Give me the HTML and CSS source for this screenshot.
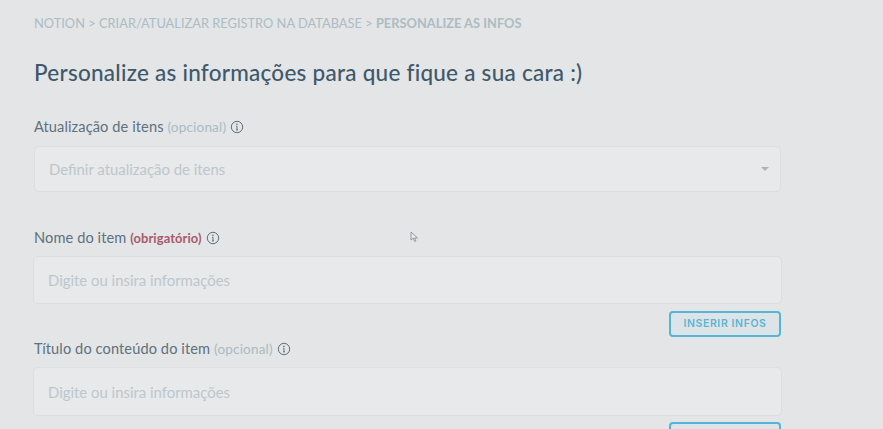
FILE: index.html
```html
<!DOCTYPE html>
<html lang="pt-BR">
<head>
<meta charset="utf-8">
<title>Personalize as infos</title>
<link rel="stylesheet" href="styles.css">
</head>
<body>
<main class="page">
  <nav class="crumbs">NOTION &gt; CRIAR/ATUALIZAR REGISTRO NA DATABASE &gt; <b>PERSONALIZE AS INFOS</b></nav>
  <h1 class="title">Personalize as informações para que fique a sua cara :)</h1>

  <section class="field field-select">
    <label class="label"><span>Atualização de itens <span class="opt">(opcional)</span></span>
      <svg class="info" viewBox="0 0 14 14"><circle cx="7" cy="7" r="5.7"/><path d="M7 6.4v3.4M6 9.9h2M6.2 6.4H7"/><circle class="dot" cx="6.9" cy="4.4" r=".8"/></svg>
    </label>
    <div class="box select-box"><span class="ph">Definir atualização de itens</span><i class="caret"></i></div>
  </section>

  <section class="field field-name">
    <label class="label"><span>Nome do item <span class="req">(obrigatório)</span></span>
      <svg class="info" viewBox="0 0 14 14"><circle cx="7" cy="7" r="5.7"/><path d="M7 6.4v3.4M6 9.9h2M6.2 6.4H7"/><circle class="dot" cx="6.9" cy="4.4" r=".8"/></svg>
    </label>
    <div class="box input-box"><span class="ph">Digite ou insira informações</span></div>
    <div class="actions"><button class="btn">INSERIR INFOS</button></div>
  </section>

  <section class="field field-title">
    <label class="label"><span>Título do conteúdo do item <span class="opt">(opcional)</span></span>
      <svg class="info" viewBox="0 0 14 14"><circle cx="7" cy="7" r="5.7"/><path d="M7 6.4v3.4M6 9.9h2M6.2 6.4H7"/><circle class="dot" cx="6.9" cy="4.4" r=".8"/></svg>
    </label>
    <div class="box input-box"><span class="ph">Digite ou insira informações</span></div>
    <div class="actions"><button class="btn">INSERIR INFOS</button></div>
  </section>
</main>
<svg class="cursor" viewBox="0 0 10 12"><path d="M1 1v8l2.200-1.800L4.600 10.500l1.300-.6-1.300-3H7.500z"/></svg>
</body>
</html>
```
FILE: styles.css
```css
* { box-sizing: border-box; }
html, body { margin: 0; height: 100%; overflow: hidden; }
body { background: #e3e5e7; font-family: "Lato", "Liberation Sans", sans-serif; color: #4a5f6c; position: relative; }
.page { width: 782px; padding: 15px 0 0 34px; }
.crumbs { font-size: 12.850px; line-height: 16px; color: #adbcc2; font-weight: 400; }
.crumbs b { font-weight: 700; }
.title { margin: 24px 0 0; font-size: 22.500px; line-height: 36px; font-weight: 500; color: #40586a; letter-spacing: .25px; }
.label { display: flex; align-items: center; gap: 4px; height: 18px; font-size: 14.600px; line-height: 18px; color: #5f717c; letter-spacing: .1px; white-space: pre; }
.opt { font-size: 13.500px; color: #a9bcc2; letter-spacing: .2px; }
.req { font-size: 12.900px; font-weight: 700; color: #a85a6a; }
.info { width: 14px; height: 14px; fill: none; stroke: #5f7079; stroke-width: 1; }
.info .dot { fill: #5f7079; stroke: none; }
.field-select { margin-top: 27px; }
.field-name { margin-top: 37px; }
.field-title { margin-top: 3px; }
.box { display: flex; align-items: center; justify-content: space-between; background: #e8e9ea; border: 1px solid #dadfe2; border-radius: 5px; font-size: 14.900px; color: #bcc7cc; padding: 0 14px; }
.select-box { margin-top: 10px; height: 46px; width: 747px; }
.input-box { margin-left: -1px; width: 749px; }
.field-name .input-box { margin-top: 9px; height: 48px; }
.field-title .input-box { margin-top: 9px; height: 49px; }
.caret { width: 0; height: 0; border-left: 4px solid transparent; border-right: 4px solid transparent; border-top: 4px solid #a9b5ba; margin-right: -3px; }
.actions { display: flex; justify-content: flex-end; width: 747px; margin-top: 7px; }
.field-title .actions { margin-top: 6px; }
.btn { width: 112px; height: 26px; padding: 0; background: #dde4e8; border: 2px solid #56b5d6; border-radius: 4px; color: #5cb4d2; font: 600 10.500px/1 "Inter", "Liberation Sans", sans-serif; letter-spacing: .6px; }
.cursor { position: absolute; left: 410px; top: 231px; width: 10px; height: 12px; fill: #e6e8ea; stroke: #7d8a91; stroke-width: .8; }
```
